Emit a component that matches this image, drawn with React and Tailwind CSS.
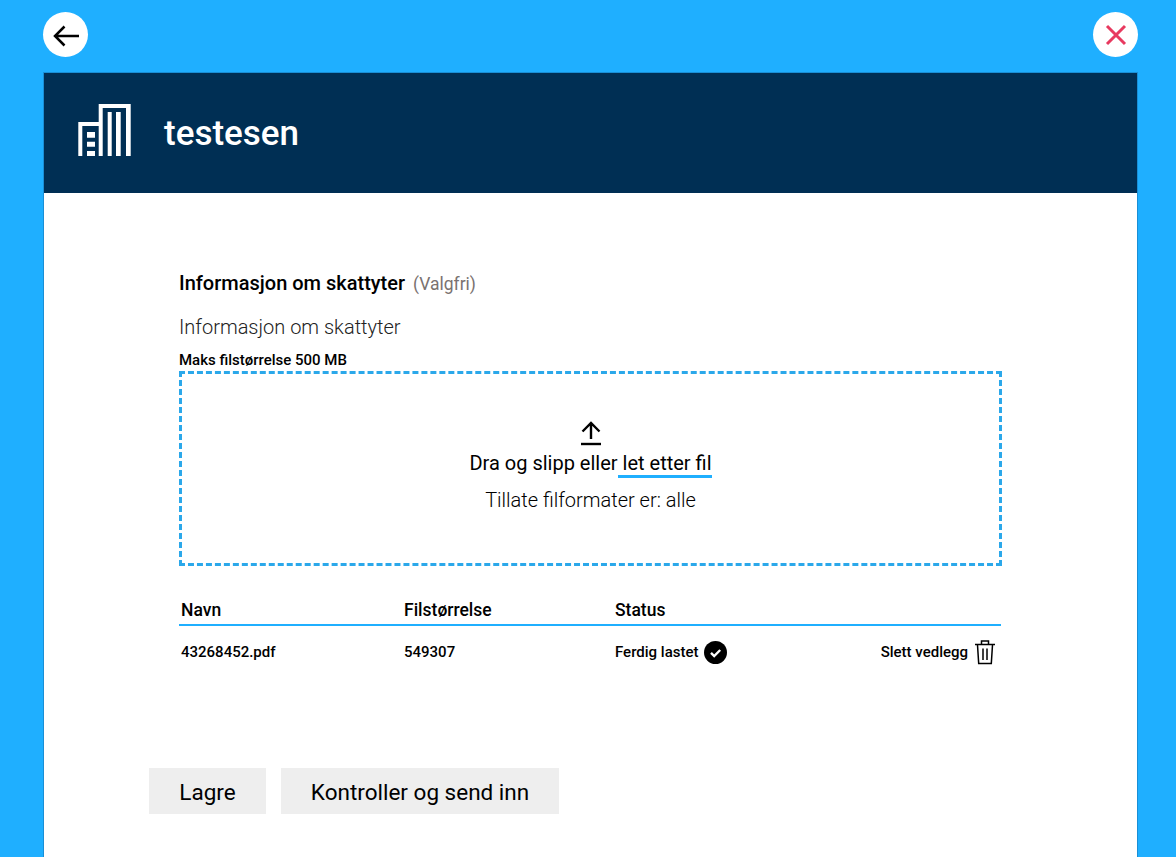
import React from 'react'

const BuildingIcon = () => (
  <svg width="53" height="52" viewBox="0 0 53 52" fill="#fff" className="ml-[34px] -mt-[6px] shrink-0">
    <path d="M20.700 52V0H52.700V52H48V4H24.700V52z" />
    <path d="M29.700 8h4v44h-4zM38 8h4.700v44H38z" />
    <path d="M0.300 52V18H21v4H4.300V52z" />
    <path d="M9 28h8v5.700H9zM9 37.700h8v5H9zM9 47h8v5H9z" />
  </svg>
)

const UploadIcon = () => (
  <svg width="24" height="26" viewBox="0 0 24 26" fill="none" stroke="#000" strokeWidth="2.4">
    <path d="M12 19V3M3.500 11.500 12 3l8.500 8.500" />
    <path d="M2 24h20" />
  </svg>
)

const TrashIcon = () => (
  <svg width="22" height="26" viewBox="0 0 22 26" fill="none" stroke="#000" strokeWidth="1.5" className="ml-[6px]">
    <path d="M1 5.500h20M7.500 5V2h7v3M3.500 6l1.200 18.500h12.600L18.500 6M9 9.500v11.500M13 9.500v11.500" />
  </svg>
)

const CheckBadge = () => (
  <svg width="23" height="23" viewBox="0 0 23 23" className="ml-[6px]">
    <circle cx="11.500" cy="11.500" r="11.500" fill="#000" />
    <path d="M7 11.800l3.200 3.200 6-6" fill="none" stroke="#fff" strokeWidth="2.400" />
  </svg>
)

export default function App() {
  return (
    <div className="h-[857px] overflow-hidden bg-[#1fafff] font-['Roboto',sans-serif] text-black">
      {/* top buttons */}
      <div className="flex h-[72px] items-start justify-between pl-[43px] pr-[38px] pt-3">
        <button className="flex h-[45px] w-[45px] items-center justify-center rounded-full bg-white">
          <svg width="26" height="22" viewBox="0 0 26 22" fill="none" stroke="#000" strokeWidth="2.500" className="mt-[3px]">
            <path d="M26 11H2M11.500 1.500 2 11l9.500 9.500" />
          </svg>
        </button>
        <button className="flex h-[45px] w-[45px] items-center justify-center rounded-full bg-white">
          <svg width="22" height="22" viewBox="0 0 22 22" fill="none" stroke="#e8395f" strokeWidth="3">
            <path d="M2 2l18 18M20 2 2 20" />
          </svg>
        </button>
      </div>

      {/* card */}
      <div className="ml-[43px] mr-[38px] h-[785px] border-x border-t border-[#1a8fd6] bg-white">
        <div className="flex h-[120px] items-center bg-[#002f54]">
          <BuildingIcon />
          <h1 className="ml-[33px] text-[35px] font-medium leading-none text-white">testesen</h1>
        </div>

        <div className="pl-[135px] pr-[136px] pt-[78px]">
          <div className="flex items-baseline gap-[8px] leading-6">
            <span className="text-[20px] font-medium">Informasjon om skattyter</span>
            <span className="text-[17.500px] font-normal text-[#7a7270]">(Valgfri)</span>
          </div>
          <p className="mt-[19px] text-[20px] font-light leading-6 text-[#222]">Informasjon om skattyter</p>
          <p className="mt-[12px] text-[15px] font-medium leading-[18px]">Maks filstørrelse 500 MB</p>

          {/* drop zone */}
          <div className="-mr-px mt-[2px] flex h-[195px] flex-col items-center border-[3px] border-dashed border-[#2ba8ea] pt-[46px]">
            <UploadIcon />
            <p className="mt-[5px] text-[20px] leading-6">
              Dra og slipp eller <span className="-ml-[5px] border-b-[3px] border-[#1fafff] pl-[5px]">let etter fil</span>
            </p>
            <p className="mt-[13px] text-[20px] font-light leading-6">Tillate filformater er: alle</p>
          </div>

          {/* file table */}
          <div className="mt-[31px] flex h-[29px] items-center border-b-2 border-[#1fafff] text-[17.500px] font-medium">
            <span className="ml-[2px] w-[223px]">Navn</span>
            <span className="w-[211px]">Filstørrelse</span>
            <span>Status</span>
          </div>
          <div className="flex h-[52px] items-center text-[15px] font-medium">
            <span className="ml-[2px] w-[223px]">43268452.pdf</span>
            <span className="w-[211px]">549307</span>
            <span className="flex items-center">Ferdig lastet <CheckBadge /></span>
            <span className="ml-auto mr-[5px] flex items-center">Slett vedlegg <TrashIcon /></span>
          </div>

          {/* actions */}
          <div className="-ml-[30px] mt-[90px] flex gap-[15px] text-[22.500px] leading-none">
            <button className="h-[46px] w-[117px] bg-[#eeeeee] pt-[2px]">Lagre</button>
            <button className="h-[46px] w-[278px] bg-[#eeeeee] pt-[2px]">Kontroller og send inn</button>
          </div>
        </div>
      </div>
    </div>
  )
}
